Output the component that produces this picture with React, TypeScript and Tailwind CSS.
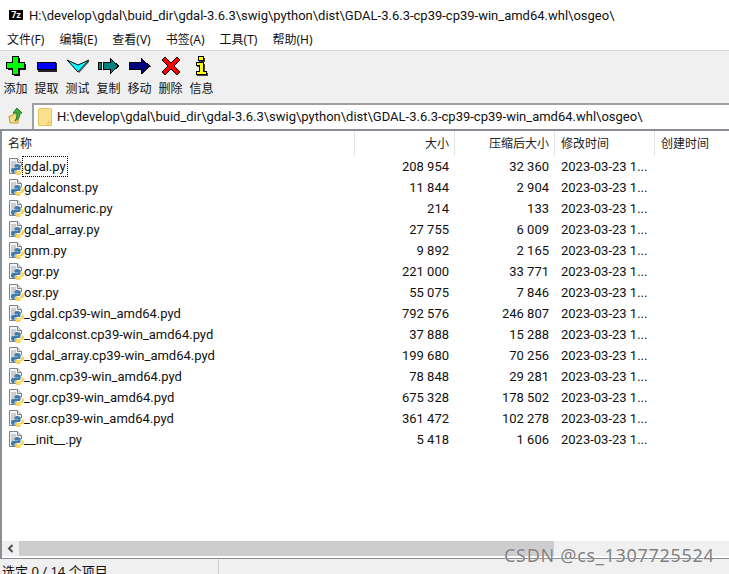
const font = { fontFamily: 'Roboto, "Noto Sans CJK SC", sans-serif' };
const cjk = { fontFamily: '"Noto Sans", "Noto Sans CJK SC", sans-serif' };

const PyIcon = () => (
  <svg width="16" height="17" viewBox="0 0 16 17" className="shrink-0">
    <path d="M1.500 .5H9.500L13.500 4.500V8H8V15.500H1.500Z" fill="#f4f4f4" stroke="#7d8488" />
    <path d="M3 4H8M3 6H8M3 8H7M3 10H6M3 12H6" stroke="#a5a9ad" />
    <path d="M9.500 .5V4.500H13.500" fill="#dfe3e6" stroke="#7d8488" />
    <path d="M9 6C7 6 6.500 7 6.500 8V9.500H10V10H5C3.500 10 3 11 3 12.500C3 14 3.700 15 5 15H6.500V13.500C6.500 12.500 7.500 12 8.500 12H11C12 12 12.500 11.500 12.500 10.500V8C12.500 6.800 11 6 9 6Z" fill="#3f7cac" />
    <path d="M13.500 9V10.800C13.500 12.200 12.500 13 11.300 13H8.500C7.800 13 7.500 13.400 7.500 14V15.500C7.500 16.500 8.800 17 10.500 17C12.200 17 13 16.300 13 15.500V14.500H10V14H14C15.200 14 16 13 16 11.500C16 10 15.200 9 14 9Z" fill="#f7d355" />
  </svg>
);

const Plus = () => (
  <svg width="22" height="22" viewBox="0 0 22 22" shapeRendering="crispEdges">
    <path d="M8 2H14V8H20V14H14V20H8V14H2V8H8Z" fill="#111" transform="translate(1 1)" />
    <path d="M7.500 1.500H13.500V7.500H19.500V13.500H13.500V19.500H7.500V13.500H1.500V7.500H7.500Z" fill="#00ff00" stroke="#000" />
  </svg>
);
const Minus = () => (
  <svg width="22" height="22" viewBox="0 0 22 22" shapeRendering="crispEdges">
    <rect x="2" y="8" width="19" height="9" fill="#222" />
    <rect x="1.500" y="7.500" width="18" height="7" fill="#0000ff" stroke="#000" />
  </svg>
);
const Check = () => (
  <svg width="24" height="22" viewBox="0 0 24 22">
    <path d="M1 5L12 10L23 5L12 17Z" fill="#00ffff" stroke="#000" />
    <path d="M12 17L23 5V7L13 18Z" fill="#555" />
  </svg>
);
const Copy = () => (
  <svg width="24" height="22" viewBox="0 0 24 22" shapeRendering="crispEdges">
    <rect x="1.500" y="7.500" width="3" height="7" fill="#008080" stroke="#000" />
    <path d="M6.500 7.500H13.500V3.500L21.500 11L13.500 18.500V14.500H6.500Z" fill="#008080" stroke="#000" />
  </svg>
);
const Move = () => (
  <svg width="24" height="22" viewBox="0 0 24 22" shapeRendering="crispEdges">
    <path d="M2.500 8.500H13.500V3.500L22.500 11.500L13.500 19.500V14.500H2.500Z" fill="#222" />
    <path d="M1.500 7.500H13.500V3.500L21.500 11L13.500 18.500V14.500H1.500Z" fill="#000080" stroke="#000" />
  </svg>
);
const Del = () => (
  <svg width="22" height="22" viewBox="0 0 22 22">
    <path d="M5 2L11 8L17 2L20 5L14 11L20 17L17 20L11 14L5 20L2 17L8 11L2 5Z" fill="#ff0000" stroke="#000" />
  </svg>
);
const Info = () => (
  <svg width="20" height="22" viewBox="0 0 20 22" shapeRendering="crispEdges">
    <path d="M7 3H13V7H7ZM5 9H13V18H16V21H5V18H8V12H5Z" fill="#444" />
    <path d="M6.500 1.500H11.500V5.500H6.500ZM4.500 7.500H11.500V16.500H14.500V19.500H4.500V16.500H7.500V10.500H4.500Z" fill="#ffff00" stroke="#000" />
  </svg>
);

const tools = [
  { label: "添加", icon: <Plus /> },
  { label: "提取", icon: <Minus /> },
  { label: "测试", icon: <Check /> },
  { label: "复制", icon: <Copy /> },
  { label: "移动", icon: <Move /> },
  { label: "删除", icon: <Del /> },
  { label: "信息", icon: <Info /> },
];

const files: [string, string, string][] = [
  ["gdal.py", "208 954", "32 360"],
  ["gdalconst.py", "11 844", "2 904"],
  ["gdalnumeric.py", "214", "133"],
  ["gdal_array.py", "27 755", "6 009"],
  ["gnm.py", "9 892", "2 165"],
  ["ogr.py", "221 000", "33 771"],
  ["osr.py", "55 075", "7 846"],
  ["_gdal.cp39-win_amd64.pyd", "792 576", "246 807"],
  ["_gdalconst.cp39-win_amd64.pyd", "37 888", "15 288"],
  ["_gdal_array.cp39-win_amd64.pyd", "199 680", "70 256"],
  ["_gnm.cp39-win_amd64.pyd", "78 848", "29 281"],
  ["_ogr.cp39-win_amd64.pyd", "675 328", "178 502"],
  ["_osr.cp39-win_amd64.pyd", "361 472", "102 278"],
  ["__init__.py", "5 418", "1 606"],
];

const menus = ["文件(F)", "编辑(E)", "查看(V)", "书签(A)", "工具(T)", "帮助(H)"];
const path = "H:\\develop\\gdal\\buid_dir\\gdal-3.6.3\\swig\\python\\dist\\GDAL-3.6.3-cp39-cp39-win_amd64.whl\\osgeo\\";

export default function App() {
  return (
    <div className="relative flex h-[574px] w-[729px] flex-col overflow-hidden bg-white text-[13px] leading-[18px] text-[#111]" style={font}>
      <div className="flex h-[29px] items-center pl-[9px] pt-[1px]">
        <div className="flex h-[10px] w-[14px] items-center justify-center bg-black text-[9px] font-bold leading-none text-white">7z</div>
        <span className="ml-[6px] mt-[1px] whitespace-nowrap">{path}</span>
      </div>
      <div className="flex h-[21px] items-center gap-[15px] pl-[7px]" style={cjk}>
        {menus.map((m) => (
          <span key={m} className="whitespace-nowrap text-[12px]">{m}</span>
        ))}
      </div>
      <div className="flex h-[53px] border-t border-[#d8d8d8] bg-[#f0f0f0]">
        {tools.map((t) => (
          <div key={t.label} className="flex w-[31px] flex-col items-center pt-[4px]">
            <div className="flex h-[22px] items-center justify-center">{t.icon}</div>
            <span className="mt-[3px] whitespace-nowrap text-[12px]">{t.label}</span>
          </div>
        ))}
      </div>
      <div className="flex h-[28px] border-b-2 border-[#8a8f96] bg-[#f0f0f0]">
        <div className="flex w-[32px] items-center justify-center">
          <svg width="16" height="18" viewBox="0 0 16 18">
            <path d="M1 9H4L5 7H11L10 16H2Z" fill="#f6dc85" stroke="#c39a3a" />
            <path d="M9 1L14 6H12C12 9 11 12 7 14C9 11 9 8 9 6H5Z" fill="#3fae3a" stroke="#1f7a25" />
          </svg>
        </div>
        <div className="flex flex-1 items-center border-l-2 border-t-2 border-[#a0a0a0] bg-white pl-[4px]">
          <svg width="14" height="18" viewBox="0 0 14 18" className="shrink-0">
            <path d="M.500 1.500A1 1 0 0 1 1.500 .500H12.500A1 1 0 0 1 13.500 1.500V17.500H.500Z" fill="#fbe08d" stroke="#e5c05f" />
            <path d="M10 17.500V14H13.500" fill="none" stroke="#e5c05f" />
          </svg>
          <span className="ml-[5px] whitespace-nowrap">{path}</span>
        </div>
      </div>
      <div className="flex min-h-0 flex-1 flex-col border-l-2 border-[#8a8f96]">
        <div className="flex h-[25px] items-center text-[12px] text-[#222]" style={cjk}>
          <div className="w-[352px] pl-[6px]">名称</div>
          <div className="h-[25px] w-[100px] border-l border-[#e5e5e5] pr-[5px] text-right leading-[25px]">大小</div>
          <div className="h-[25px] w-[100px] border-l border-[#e5e5e5] pr-[5px] text-right leading-[25px]">压缩后大小</div>
          <div className="h-[25px] w-[100px] border-l border-[#e5e5e5] pl-[6px] leading-[25px]">修改时间</div>
          <div className="h-[25px] flex-1 border-l border-[#e5e5e5] pl-[6px] leading-[25px]">创建时间</div>
        </div>
        <div className="min-h-0 flex-1">
          {files.map(([name, size, packed], i) => (
            <div key={name} className="flex h-[21px] items-center">
              <div className="flex w-[352px] items-center pl-[6px]">
                <PyIcon />
                <span className={`ml-[-2px] whitespace-nowrap px-[1px] leading-[19px] ${i === 0 ? "border border-dotted border-black" : "border border-transparent"}`}>{name}</span>
              </div>
              <div className="w-[100px] pr-[5px] text-right">{size}</div>
              <div className="w-[100px] pr-[5px] text-right">{packed}</div>
              <div className="w-[100px] whitespace-nowrap pl-[7px]">2023-03-23 1...</div>
            </div>
          ))}
        </div>
        <div className="flex h-[15px] bg-[#f0f0f0]">
          <div className="flex w-[17px] items-center justify-center">
            <svg width="7" height="9" viewBox="0 0 7 9"><path d="M5.500 1L2 4.500L5.500 8" fill="none" stroke="#505050" strokeWidth="2" /></svg>
          </div>
          <div className="w-[535px] bg-[#cdcdcd]" />
        </div>
        <div className="h-[2px]" />
      </div>
      <div className="flex h-[16px] overflow-hidden border-t border-[#8a8f96] bg-[#f0f0f0]">
        <div className="w-[219px] whitespace-nowrap border-r border-[#d0d0d0] pl-[2px] pt-[3px] text-[13px] leading-[18px]" style={cjk}>选定 0 / 14 个项目</div>
      </div>
      <span className="absolute left-[504px] top-[542px] whitespace-nowrap text-[18px] leading-[26px] tracking-[.7px] text-[#808080]" style={{ ...cjk, textShadow: "0 0 1px #fff" }}>CSDN @cs_1307725524</span>
    </div>
  );
}
